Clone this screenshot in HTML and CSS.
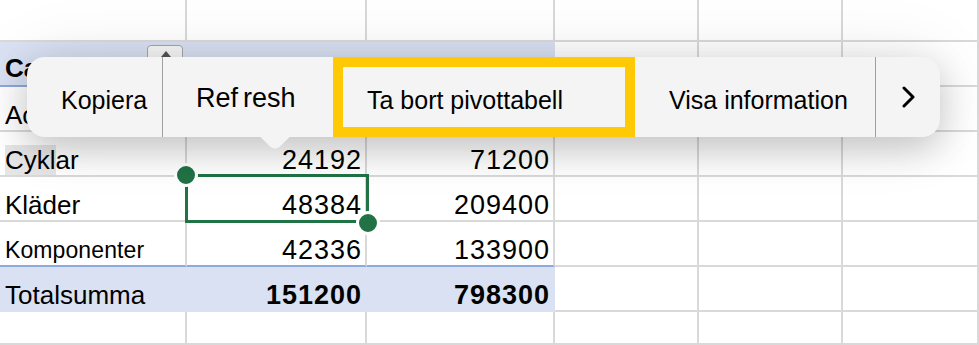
FILE: index.html
```html
<!DOCTYPE html>
<html lang="sv">
<head>
  <meta charset="UTF-8">
  <title>Pivottabell</title>
  <meta name="viewport" content="width=device-width, initial-scale=1.0" />
  <link rel="stylesheet" href="styles.css">
</head>
<body>
  <div class="sheet">
    <div class="cell"></div><div class="cell"></div><div class="cell"></div><div class="cell"></div><div class="cell"></div><div class="cell"></div>

    <div class="cell head label">Category<span class="filter-btn"><span class="filter-arrow"></span></span></div>
    <div class="cell head"></div>
    <div class="cell head"></div>
    <div class="cell"></div><div class="cell"></div><div class="cell"></div>

    <div class="cell label">Accessoarer</div>
    <div class="cell"></div>
    <div class="cell"></div>
    <div class="cell"></div><div class="cell"></div><div class="cell"></div>

    <div class="cell label"><span class="hl">Cykl</span>ar</div>
    <div class="cell num">24192</div>
    <div class="cell num">71200</div>
    <div class="cell"></div><div class="cell"></div><div class="cell"></div>

    <div class="cell label">Kläder</div>
    <div class="cell num">48384</div>
    <div class="cell num">209400</div>
    <div class="cell"></div><div class="cell"></div><div class="cell"></div>

    <div class="cell label small last">Komponenter</div>
    <div class="cell num last">42336</div>
    <div class="cell num last">133900</div>
    <div class="cell"></div><div class="cell"></div><div class="cell"></div>

    <div class="cell total label">Totalsumma</div>
    <div class="cell total num">151200</div>
    <div class="cell total num">798300</div>
    <div class="cell"></div><div class="cell"></div><div class="cell"></div>

    <div class="cell"></div><div class="cell"></div><div class="cell"></div><div class="cell"></div><div class="cell"></div><div class="cell"></div>
  </div>

  <!-- selected cell with drag handles -->
  <div class="selection">
    <span class="handle tl"></span>
    <span class="handle br"></span>
  </div>

  <!-- context menu -->
  <div class="popup">
    <div class="item copy">Kopiera</div>
    <div class="item refresh">Re<span class="gap">f</span>resh</div>
    <div class="item remove">Ta bort pivottabell</div>
    <div class="item info">Visa information</div>
    <div class="item more">
      <svg width="14" height="22" viewBox="0 0 14 22">
        <polyline points="2,2 11,11 2,20" fill="none" stroke="#000" stroke-width="3" stroke-linecap="round" stroke-linejoin="round"/>
      </svg>
    </div>
    <span class="tail"></span>
  </div>
</body>
</html>
```

FILE: styles.css
```css
body {
  margin: 0;
  background: #fff;
  font-family: 'Liberation Sans', Arial, sans-serif;
  color: #000;
  overflow: hidden;
  height: 345px;
  position: relative;
}

.sheet {
  display: grid;
  grid-template-columns: 187px 180px 188px 144px 144px 136px;
  grid-template-rows: 42px repeat(6, 45px) 33px;
}

.cell {
  box-sizing: border-box;
  border-right: 2px solid #d9d9d9;
  border-bottom: 2px solid #d9d9d9;
  display: flex;
  align-items: flex-end;
  font-size: 26px;
  line-height: 30px;
  white-space: nowrap;
  position: relative;
}

.label {
  padding-left: 5px;
}

.num {
  justify-content: flex-end;
  padding-right: 3px;
  font-size: 27px;
  letter-spacing: 1px;
}

.small {
  font-size: 23px;
  letter-spacing: 0.1px;
}

.hl {
  background: #e6e6e6;
}

.head {
  background: #d9e1f2;
  border-right-color: #d9e1f2;
  border-bottom-color: #8ea9db;
  font-weight: bold;
  padding-bottom: 2px;
}

.last {
  border-bottom-color: #8ea9db;
}

.total {
  background: #d9e1f2;
  border-right-color: #d9e1f2;
  border-bottom-color: #d9e1f2;
}

.total.num {
  font-weight: bold;
}

.filter-btn {
  position: absolute;
  left: 147px;
  top: 3px;
  width: 36px;
  height: 30px;
  box-sizing: border-box;
  border: 1px solid #a6a6a6;
  border-radius: 4px;
  background: #f7f7f7;
}

.filter-arrow {
  position: absolute;
  left: 13px;
  top: 5px;
  border-left: 5px solid transparent;
  border-right: 5px solid transparent;
  border-bottom: 6px solid #555;
}

.selection {
  position: absolute;
  left: 185px;
  top: 174px;
  width: 184px;
  height: 49px;
  box-sizing: border-box;
  border: 3px solid #217346;
}

.handle {
  position: absolute;
  width: 18px;
  height: 18px;
  border-radius: 50%;
  background: #217346;
  border: 3px solid #fff;
}

.handle.tl {
  left: -14px;
  top: -14px;
}

.handle.br {
  right: -14px;
  bottom: -15px;
}

.popup {
  position: absolute;
  left: 27px;
  top: 57px;
  width: 913px;
  height: 80px;
  display: flex;
  background: #f4f4f4;
  border-radius: 18px;
  box-shadow: 0 12px 36px rgba(0, 0, 0, 0.2), 0 0 70px rgba(0, 0, 0, 0.09);
  z-index: 2;
}

.item {
  box-sizing: border-box;
  height: 80px;
  padding-top: 6px;
  display: flex;
  align-items: center;
  font-size: 25px;
  white-space: nowrap;
}

.copy {
  width: 136px;
  padding-left: 34px;
  border-right: 1px solid #a0a0a0;
}

.refresh {
  width: 170px;
  padding-left: 33px;
  padding-top: 2px;
  font-size: 27px;
}

.gap {
  margin-right: 5px;
}

.remove {
  width: 302px;
  padding-left: 24px;
  padding-top: 0;
  border: 10px solid #ffc905;
  padding-top: 6px;
}

.info {
  width: 241px;
  padding-left: 34px;
  border-right: 1px solid #a0a0a0;
}

.more {
  width: 64px;
  padding-left: 26px;
  padding-top: 0;
}

.more svg {
  display: block;
}

.tail {
  position: absolute;
  left: 237px;
  top: 68px;
  width: 22px;
  height: 22px;
  background: #f4f4f4;
  transform: rotate(45deg);
  border-bottom-right-radius: 7px;
  z-index: -1;
}
```
